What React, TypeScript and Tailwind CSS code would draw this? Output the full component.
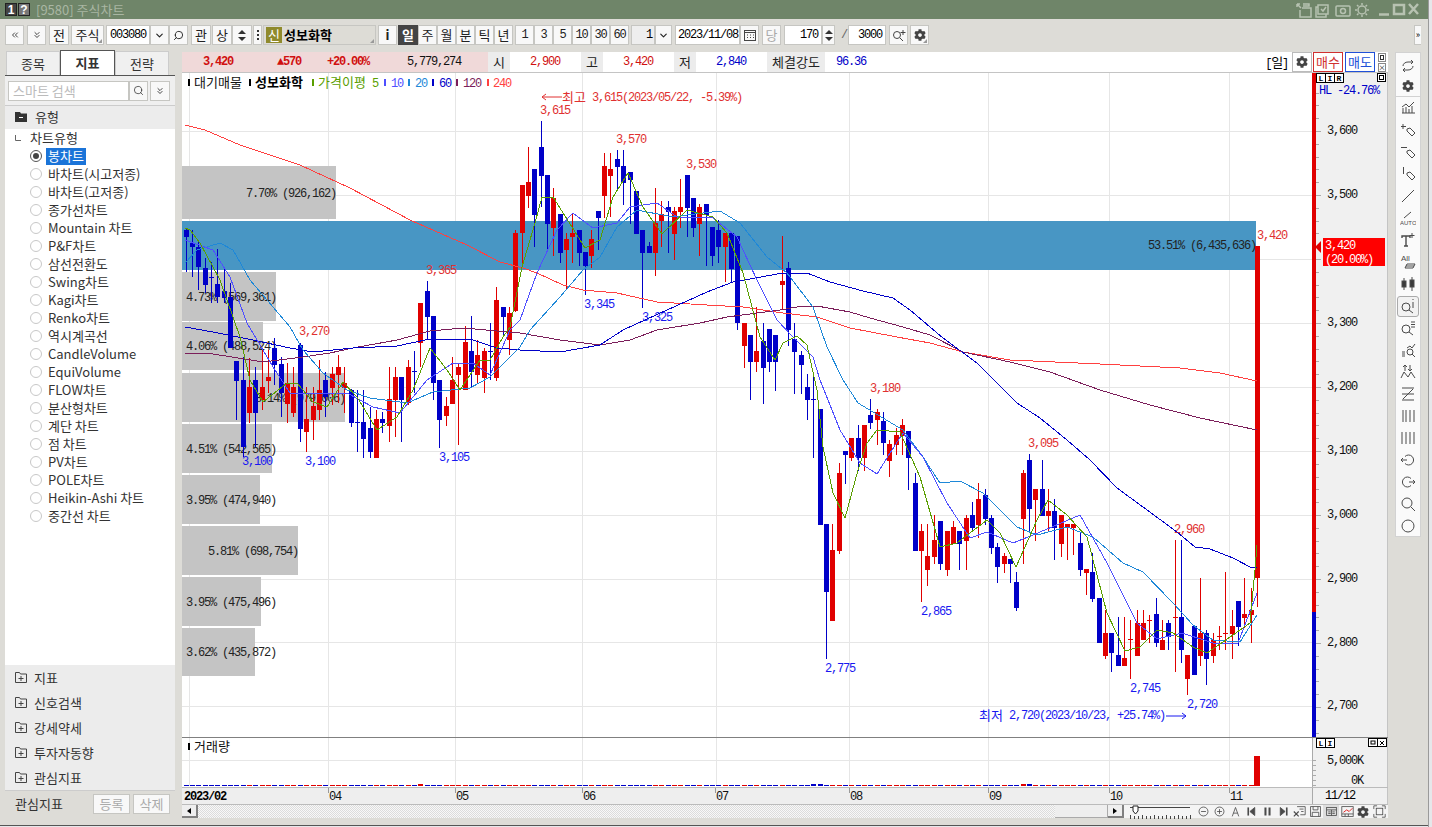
import { ChevronDown, ChevronsDown, ChevronsLeft, Search } from "lucide-react";
import { FaCog } from "react-icons/fa";
import type { ReactNode } from "react";

const mono = "font-['Liberation_Mono','Noto_Sans_CJK_KR',monospace] tracking-[-1.2px] text-xs";
const kr = "font-['Noto_Sans_CJK_KR','Liberation_Sans',sans-serif] text-[13px]";

type Row = [string, number, number, number, number];

// candle rows are read from 3x crops: [colour, body top, body bottom, wick top, wick bottom]
const seg = (oy: number, rows: Row[]) =>
  rows.map(([c, t, b, wt, wb]) => ({
    c,
    t: Math.round(oy + t / 3),
    b: Math.round(oy + b / 3),
    wt: Math.round(oy + wt / 3),
    wb: Math.round(oy + wb / 3),
  }));

const candles = [
  ...seg(220, [
    ["b", 30, 50, 25, 155], ["b", 70, 80, 30, 170], ["b", 80, 140, 60, 210], ["b", 145, 195, 115, 220],
    ["b", 170, 173, 125, 250], ["b", 192, 232, 88, 250], ["b", 212, 235, 145, 250], ["b", 232, 385, 190, 385],
    ["b", 423, 483, 423, 600], ["b", 480, 680, 410, 710], ["r", 500, 578, 415, 608], ["b", 480, 578, 440, 680],
    ["r", 500, 540, 390, 570], ["r", 470, 483, 390, 520], ["b", 385, 435, 355, 495], ["b", 432, 520, 410, 590],
    ["r", 490, 552, 430, 608], ["r", 500, 578, 440, 590], ["b", 375, 627, 370, 665], ["r", 597, 635, 500, 695],
    ["r", 558, 600, 500, 660], ["r", 510, 570, 420, 600], ["b", 480, 530, 455, 590], ["r", 462, 504, 440, 555],
    ["r", 440, 465, 405, 550], ["r", 488, 505, 440, 578], ["b", 510, 608, 508, 620], ["b", 606, 609, 510, 695],
    ["b", 606, 656, 510, 715], ["b", 624, 696, 560, 715], ["r", 597, 714, 570, 714], ["b", 597, 608, 575, 640],
    ["r", 537, 618, 440, 665], ["r", 470, 540, 440, 650], ["b", 470, 540, 470, 665], ["r", 440, 550, 420, 555],
    ["b", 453, 456, 392, 520], ["r", 249, 370, 249, 440], ["b", 212, 290, 183, 360], ["b", 288, 490, 288, 540],
    ["b", 480, 600, 480, 683], ["r", 558, 588, 530, 617], ["r", 480, 552, 410, 552], ["r", 440, 465, 430, 675],
    ["r", 365, 510, 318, 510], ["b", 393, 455, 288, 505], ["r", 405, 465, 360, 490], ["r", 393, 473, 383, 520],
    ["b", 393, 396, 308, 480], ["r", 240, 473, 200, 483], ["b", 261, 290, 261, 350], ["r", 278, 360, 260, 405],
    ["r", 40, 272, 30, 275],
  ]),
  ...seg(110, [
    ["r", 225, 370, 225, 470], ["r", 216, 258, 110, 295], ["b", 177, 315, 177, 410], ["b", 111, 197, 33, 290],
    ["b", 195, 342, 195, 420], ["r", 264, 353, 235, 438], ["b", 312, 428, 312, 460], ["r", 387, 420, 370, 540],
    ["r", 370, 381, 312, 458], ["b", 360, 428, 360, 468], ["b", 426, 468, 426, 555], ["r", 387, 437, 360, 475],
    ["b", 303, 323, 303, 420], ["r", 168, 258, 129, 325], ["r", 177, 197, 129, 322], ["b", 147, 171, 120, 237],
    ["b", 168, 219, 120, 285], ["b", 187, 210, 187, 342], ["b", 243, 372, 243, 372], ["b", 360, 428, 360, 595],
    ["b", 408, 428, 395, 428], ["r", 339, 428, 235, 497], ["r", 312, 333, 273, 410], ["b", 291, 306, 273, 428],
    ["r", 303, 372, 292, 450], ["r", 291, 306, 207, 353], ["b", 195, 295, 195, 381], ["b", 264, 353, 264, 381],
    ["r", 291, 342, 283, 438], ["b", 282, 315, 282, 467], ["b", 351, 437, 351, 467], ["b", 360, 410, 330, 460],
    ["r", 369, 410, 369, 515], ["b", 369, 477, 369, 520], ["b", 378, 640, 378, 660],
  ]),
  ...seg(230, [
    ["r", 279, 348, 279, 413], ["b", 315, 395, 315, 510], ["r", 363, 395, 232, 426], ["b", 333, 414, 279, 522],
    ["b", 297, 396, 297, 426], ["b", 315, 396, 315, 483], ["r", 153, 165, 18, 240], ["b", 114, 300, 96, 348],
    ["b", 327, 366, 279, 492], ["b", 375, 405, 363, 492], ["b", 471, 510, 432, 570], ["b", 507, 510, 441, 684],
  ]),
  ...seg(380, [
    ["b", 87, 435, 87, 435], ["b", 432, 636, 432, 836], ["r", 510, 722, 432, 722], ["r", 279, 513, 250, 522],
    ["b", 213, 225, 213, 312], ["r", 174, 234, 174, 243], ["b", 174, 234, 135, 273], ["r", 135, 234, 135, 273],
    ["b", 105, 129, 57, 147], ["r", 96, 120, 87, 195], ["b", 124, 189, 96, 225], ["r", 192, 243, 180, 291],
    ["r", 165, 195, 144, 225], ["r", 135, 168, 117, 225], ["b", 153, 234, 153, 330], ["b", 309, 513, 279, 513],
    ["r", 453, 513, 432, 666], ["r", 528, 570, 432, 618], ["r", 480, 531, 405, 552], ["b", 423, 552, 423, 570],
    ["r", 453, 570, 453, 588], ["r", 441, 492, 423, 492], ["b", 453, 492, 453, 570], ["r", 414, 483, 405, 570],
    ["b", 405, 444, 366, 456], ["r", 357, 435, 309, 474], ["b", 345, 417, 327, 435], ["b", 414, 504, 405, 522],
    ["b", 501, 561, 489, 609], ["r", 528, 552, 519, 579], ["b", 537, 552, 537, 609], ["b", 606, 684, 576, 693],
    ["r", 279, 417, 270, 552], ["b", 240, 387, 222, 456], ["r", 327, 360, 327, 483],
  ]),
  ...seg(440, [
    ["b", 147, 228, 60, 228], ["r", 213, 228, 147, 276], ["b", 213, 264, 177, 360], ["r", 225, 312, 225, 350],
    ["r", 252, 264, 252, 360], ["r", 252, 264, 252, 345], ["b", 309, 390, 276, 408], ["r", 387, 399, 387, 465],
    ["b", 396, 477, 340, 486], ["b", 474, 609, 474, 609], ["r", 579, 648, 510, 657], ["b", 579, 639, 579, 696],
    ["b", 645, 678, 531, 678], ["r", 654, 678, 531, 678], ["r", 597, 600, 540, 717], ["r", 549, 648, 510, 648],
    ["r", 549, 600, 510, 600], ["r", 539, 542, 525, 609], ["b", 522, 609, 474, 622], ["r", 600, 630, 540, 630],
    ["b", 549, 591, 540, 630], ["r", 531, 534, 300, 696], ["b", 531, 630, 300, 669], ["r", 645, 717, 645, 765],
    ["b", 558, 705, 558, 705], ["r", 579, 648, 414, 678], ["b", 579, 657, 570, 735], ["r", 600, 648, 579, 669],
    ["r", 588, 591, 558, 630], ["r", 578, 581, 396, 630], ["r", 558, 582, 510, 657], ["b", 483, 561, 483, 618],
    ["r", 522, 534, 414, 564], ["r", 510, 525, 444, 609], ["r", -582, 415, -582, 500],
  ]),
];

const cx = (i: number) => Math.round(185.7 + i * 6.34);
const RED = "#e00000";
const BLUE = "#0000c8";

const ma240 = "185,125 205,130 240,145 300,165 350,188 410,220 467,245 500,262 523,268 537,273 563,285 583,290 617,293 657,302 707,305 743,307 783,313 817,317 850,328 897,337 930,343 963,352 1010,360 1100,364 1180,368 1220,373 1257,381";
const ma120 = "185,353 213,354 263,362 303,357 330,353 353,348 397,340 430,331 463,328 520,333 560,340 600,345 630,340 657,330 700,323 727,317 780,310 797,307 817,306 850,312 870,318 903,327 930,335 963,352 1010,362 1050,372 1100,390 1150,405 1200,418 1257,430";
const ma60 = "185,327 213,332 253,340 290,348 313,352 353,348 397,346 430,339 470,339 497,348 520,350 560,352 600,345 623,330 667,310 707,292 733,282 783,273 807,273 830,282 863,291 893,298 910,310 943,338 977,363 1017,403 1040,418 1067,440 1090,460 1117,488 1143,507 1177,532 1195,547 1210,549 1233,558 1252,568 1257,567";
const ma20 = "185,263 197,250 220,243 233,250 250,280 273,307 290,327 303,350 323,373 347,390 370,398 407,403 433,392 470,388 490,377 520,347 530,330 560,297 583,270 600,257 617,227 637,210 673,217 687,215 720,211 740,223 767,257 787,273 813,307 827,347 843,380 858,403 903,430 923,457 940,483 960,481 983,493 1017,527 1037,535 1067,527 1093,537 1123,563 1143,572 1173,603 1193,625 1213,640 1240,642 1257,615";
const ma10 = "185,240 213,250 230,277 247,323 273,367 290,393 320,393 347,393 373,407 400,413 427,380 453,363 473,363 490,375 510,330 520,320 537,273 557,230 573,213 593,228 617,223 630,207 657,203 677,217 713,218 737,237 757,280 777,320 793,337 813,357 820,380 840,430 860,463 877,474 890,453 903,433 923,457 947,503 970,538 987,532 1013,543 1033,535 1080,515 1107,563 1137,623 1157,639 1182,633 1213,643 1238,643 1257,593";
const ma5 = "185,228 190,230 200,243 220,280 240,337 250,380 263,402 287,383 297,383 313,402 327,407 343,382 357,397 377,430 397,417 413,390 430,348 447,370 460,390 480,360 490,360 503,337 510,327 522,267 535,223 542,197 553,197 572,227 585,248 600,240 613,197 628,173 643,207 662,234 687,210 713,217 727,233 743,273 760,337 775,360 783,343 797,336 807,345 817,390 823,447 833,493 845,518 858,470 867,443 877,430 900,432 920,477 940,547 957,543 987,520 1000,533 1016,567 1037,520 1048,500 1067,515 1087,537 1107,613 1125,651 1140,647 1157,630 1173,633 1193,647 1207,653 1223,642 1250,623 1255,570 1257,545";

const profile = [
  { y: 166, h: 53, r: 336, x: 246, t: "7.70% (926,162)" },
  { y: 272, h: 49, r: 276, x: 186, t: "4.73% (569,361)" },
  { y: 322, h: 48, r: 263, x: 186, t: "4.06% (488,524)" },
  { y: 373, h: 49, r: 345, x: 255, t: "8.14% (979,006)" },
  { y: 424, h: 49, r: 272, x: 186, t: "4.51% (542,565)" },
  { y: 475, h: 49, r: 260, x: 186, t: "3.95% (474,940)" },
  { y: 526, h: 49, r: 298, x: 208, t: "5.81% (698,754)" },
  { y: 577, h: 49, r: 261, x: 186, t: "3.95% (475,496)" },
  { y: 628, h: 48, r: 255, x: 186, t: "3.62% (435,872)" },
];

const peaks: [number, number, string, string][] = [
  [540, 110, "3,615", "#e03030"], [616, 139, "3,570", "#e03030"], [686, 164, "3,530", "#e03030"],
  [426, 270, "3,365", "#e03030"], [299, 331, "3,270", "#e03030"], [870, 388, "3,180", "#e03030"],
  [1028, 443, "3,095", "#e03030"], [1174, 529, "2,960", "#e03030"], [1257, 235, "3,420", "#e03030"],
  [242, 461, "3,100", "#1818f0"], [305, 461, "3,100", "#1818f0"], [439, 457, "3,105", "#1818f0"],
  [584, 304, "3,345", "#1818f0"], [642, 317, "3,325", "#1818f0"], [921, 611, "2,865", "#1818f0"],
  [825, 668, "2,775", "#1818f0"], [1130, 688, "2,745", "#1818f0"], [1187, 704, "2,720", "#1818f0"],
];

const vGrid = [189, 328, 455, 582, 716, 849, 988, 1109, 1229];
const hGrid = [131, 195, 259, 323, 387, 451, 515, 579, 642, 706];
const months: [number, string][] = [[329, "04"], [456, "05"], [583, "06"], [716, "07"], [850, "08"], [989, "09"], [1110, "10"], [1230, "11"]];

const chartTypes = [
  "봉차트", "바차트(시고저종)", "바차트(고저종)", "종가선차트", "Mountain 차트", "P&F차트", "삼선전환도", "Swing차트",
  "Kagi차트", "Renko차트", "역시계곡선", "CandleVolume", "EquiVolume", "FLOW차트", "분산형차트", "계단 차트", "점 차트",
  "PV차트", "POLE차트", "Heikin-Ashi 차트", "중간선 차트",
];

function Btn({ className = "", children, corner }: { className?: string; children?: ReactNode; corner?: boolean }) {
  return (
    <div className={`relative flex h-5 shrink-0 items-center justify-center border border-[#c6c6c2] bg-[#f8f8f8] text-[#222] ${className}`}>
      {children}
      {corner && <span className="absolute bottom-px right-px h-0 w-0 border-b-[4px] border-l-[4px] border-b-[#999] border-l-transparent" />}
    </div>
  );
}

function Ico({ children, size = 16 }: { children: ReactNode; size?: number }) {
  return (
    <svg width={size} height={size} viewBox="0 0 16 16" fill="none" stroke="#4a4a4a" strokeWidth="1" className="shrink-0">
      {children}
    </svg>
  );
}

const toolIcons: ReactNode[] = [
  <><path d="M2 13h13M3 13V8M6 13V7M9 13V9M12 13V6" /><path d="M2 7l4-3 3 3 5-5" /></>,
  <><path d="M2 2v5M0 4.500h5" transform="translate(1 0)" /><path d="M7 7l3-1 5 5-3 3-5-5z" /></>,
  <><path d="M1 3.500h6" /><path d="M7 7l3-1 5 5-3 3-5-5z" /></>,
  <><path d="M3.500 1v7" /><path d="M7 7l3-1 5 5-3 3-5-5z" /></>,
  <path d="M2 14L14 2" />,
  <><path d="M4 8l7-6" /><text x="0" y="15" fill="#4a4a4a" stroke="none" className="font-['Liberation_Sans',sans-serif] text-[6px]">AUTO</text></>,
  <><path d="M2 6V4h8v2M6 4v10M4 14h4" strokeWidth="1.400" /><path d="M12 1v5M9.500 3.500h5" /></>,
  <><text x="1" y="7" fill="#4a4a4a" stroke="none" className="font-['Liberation_Sans',sans-serif] text-[8px]">All</text><path d="M5 14l2-4h8l-2 4z" /><path d="M6 12h8" /></>,
  <><path d="M4 2v12M12 1v14" /><rect x="2" y="5" width="4" height="6" fill="#3a3a3a" /><rect x="10" y="4" width="4" height="7" fill="#3a3a3a" /></>,
  <><circle cx="6" cy="9" r="4" /><path d="M9 12l4 3" /><path d="M13 1v1M13 4v6" /></>,
  <><circle cx="6" cy="9" r="4" /><path d="M9 12l4 3M11 2h4M11 4.500h4M11 7h4" /></>,
  <><path d="M7 6l3-2 2 2 3-4M2 10h3M2 12h3M2 14h3" /><circle cx="10" cy="10" r="3" /><path d="M12 12l3 3" /></>,
  <><path d="M5 1v6M3 3l2-2 2 2M10 7V1M8 5l2 2 2-2" /><path d="M1 14l3-6 4 5 3-5 4 6" /></>,
  <path d="M2 2h12M2 8h12M2 14h12M13 3L3 13" />,
  <path d="M3 2v12M6 2v12M10 2v12M14 2v12" />,
  <path d="M2 2v12M6 2v12M10 2v12M14 2v12" />,
  <><path d="M5 4.500a5 5 0 1 1 0 7" /><path d="M1 8h6M3 6L1 8l2 2" /></>,
  <><path d="M11 4.500a5 5 0 1 0 0 7" /><path d="M9 8h6M13 6l2 2-2 2" /></>,
  <><circle cx="7" cy="7" r="5" /><path d="M11 11l4 4" /></>,
  <circle cx="8" cy="8" r="6" />,
];

const bottomIcons: ReactNode[] = [
  <><circle cx="8" cy="8" r="5.500" /><path d="M5 8h6" /></>,
  <><circle cx="8" cy="8" r="5.500" /><path d="M5 8h6M8 5v6" /></>,
  <path d="M4 14L8 3l4 11M5.500 10h5" />,
  <><path d="M4 3v10" strokeWidth="2" /><path d="M12 3v10L6 8z" fill="#4a4a4a" /></>,
  <path d="M5.500 3v10M10.500 3v10" strokeWidth="2.500" />,
  <><path d="M12 3v10" strokeWidth="2" /><path d="M4 3v10l6-5z" fill="#4a4a4a" /></>,
  <><path d="M5 2h10v10H9" /><path d="M1 8l6 6M7 8l-6 6" strokeWidth="1.400" /><path d="M8 5h5M10 8h3" /></>,
  <><rect x="2" y="2" width="12" height="12" /><path d="M5 2v4h6V2M4 14V9h8v5" /></>,
  <><rect x="2" y="3" width="12" height="10" /><path d="M2 6h12M4 8.500h3M9 8.500h3M4 10.500h3M9 10.500h3M8 6v7" /></>,
  <><rect x="1" y="2" width="14" height="12" /><path d="M1 11h14M5 11v3M9 11v3" /><path d="M3 9l4-3 3 2 4-4" stroke="#e00000" /></>,
  null,
  <><rect x="4" y="4" width="8" height="8" /><path d="M1 5V1h4M11 1h4v4M15 11v4h-4M5 15H1v-4" /></>,
];

function Boxed({ x, y, w, c, s = 9 }: { x: number; y: number; w: number; c: string; s?: number }) {
  return (
    <g>
      <rect x={x + 0.5} y={y + 0.5} width={w} height={s} fill="#fff" stroke="#000" />
      <text x={x + w / 2 + 0.5} y={y + 8} textAnchor="middle" fill="#000" fontWeight="bold" className="font-['Liberation_Mono',monospace] text-[8px]">{c}</text>
    </g>
  );
}

function PriceChart() {
  return (
    <svg width={1130} height={664} viewBox="182 73 1130 664" className="block shrink-0 bg-white">
      {vGrid.map((x) => <rect key={x} x={x} y={73} width={1} height={664} fill="#e6e6e6" />)}
      {hGrid.map((y) => <rect key={y} x={182} y={y} width={1130} height={1} fill="#e6e6e6" />)}

      {profile.map((p) => <rect key={p.y} x={182} y={p.y} width={p.r - 182} height={p.h} fill="#c4c4c4" />)}
      <rect x={182} y={221} width={1074} height={49} fill="#4896c4" />
      {profile.map((p) => <text key={p.t} x={p.x} y={p.y + p.h / 2 + 4} fill="#222" className={mono}>{p.t}</text>)}
      <text x={1148} y={249} fill="#222" className={mono}>53.51% (6,435,636)</text>

      {peaks.map(([x, y, t, c]) => <text key={`${t}${x}`} x={x} y={y + 4} fill={c} className={mono}>{t}</text>)}

      <g shapeRendering="crispEdges">
        {candles.map((k, i) => {
          const fill = k.c === "r" ? RED : BLUE;
          return (
            <g key={i} fill={fill}>
              <rect x={cx(i)} y={k.wt} width={1} height={Math.max(k.wb - k.wt, 1)} />
              <rect x={cx(i) - 2} y={k.t} width={5} height={Math.max(k.b - k.t, 1)} />
            </g>
          );
        })}
      </g>

      <g fill="none" strokeWidth="1" shapeRendering="crispEdges">
        <polyline points={ma240} stroke="#ff4040" />
        <polyline points={ma120} stroke="#7b1e5a" />
        <polyline points={ma60} stroke="#0000c8" />
        <polyline points={ma20} stroke="#1e88d8" />
        <polyline points={ma10} stroke="#4f4fff" />
        <polyline points={ma5} stroke="#5a9e00" />
      </g>

      <rect x={188} y={79} width={2} height={7} fill="#000" />
      <text x={194} y={87} fill="#111" className={kr}>대기매물</text>
      <rect x={249} y={79} width={2} height={7} fill="#000" />
      <text x={255} y={87} fill="#000" fontWeight="bold" className={kr}>성보화학</text>
      <rect x={312} y={79} width={2} height={7} fill="#5a9e00" />
      <text x={318} y={87} fill="#5a9e00" className={kr}>가격이평</text>
      <text x={372} y={87} fill="#5a9e00" className={mono}>5</text>
      <rect x={384} y={79} width={2} height={7} fill="#4f4fff" />
      <text x={391} y={87} fill="#4f4fff" className={mono}>10</text>
      <rect x={408} y={79} width={2} height={7} fill="#1e88d8" />
      <text x={415} y={87} fill="#1e88d8" className={mono}>20</text>
      <rect x={432} y={79} width={2} height={7} fill="#0000c8" />
      <text x={439} y={87} fill="#0000c8" className={mono}>60</text>
      <rect x={456} y={79} width={2} height={7} fill="#7b1e5a" />
      <text x={463} y={87} fill="#7b1e5a" className={mono}>120</text>
      <rect x={487} y={79} width={2} height={7} fill="#ff4040" />
      <text x={493} y={87} fill="#ff4040" className={mono}>240</text>

      <path d="M542 97h20M546 94l-4 3 4 3" stroke="#e03030" fill="none" />
      <text x={562} y={102} fill="#e03030" className={kr}>최고</text>
      <text x={592} y={101} fill="#e03030" className={mono}>3,615(2023/05/22, -5.39%)</text>
      <text x={979} y={720} fill="#1818f0" className={kr}>최저</text>
      <text x={1009} y={719} fill="#1818f0" className={mono}>2,720(2023/10/23, +25.74%)</text>
      <path d="M1166 716h20M1182 713l4 3-4 3" stroke="#1818f0" fill="none" />
    </svg>
  );
}

function PriceAxis() {
  const ticks = Array.from({ length: 52 }, (_, i) => 131 - 12.8 * 4 + i * 12.8);
  const labels: [number, string][] = [[130, "3,600"], [194, "3,500"], [322, "3,300"], [386, "3,200"], [450, "3,100"], [514, "3,000"], [578, "2,900"], [642, "2,800"], [705, "2,700"]];
  return (
    <svg width={71} height={664} viewBox="1316 73 71 664" className="block shrink-0 bg-[#f0f0f0]">
      {ticks.map((y, i) => (
        <rect key={y} x={1316} y={Math.round(y)} width={(i - 4) % 5 === 0 ? 5 : 3} height={1} fill="#aaa" />
      ))}
      <Boxed x={1316} y={73} w={9} c="L" />
      <Boxed x={1325} y={73} w={9} c="I" />
      <Boxed x={1334} y={73} w={9} c="R" />
      <rect x={1377.5} y={73.5} width={8} height={8} fill="#fff" stroke="#000" />
      <rect x={1379.5} y={75.5} width={4} height={4} fill="none" stroke="#000" />
      <text x={1319} y={94} fill="#0000c8" className={mono}>HL -24.76%</text>
      {labels.map(([y, t]) => <text key={t} x={1327} y={y + 4} fill="#111" className={mono}>{t}</text>)}
      <path d="M1321 241v12l-6-6z" fill="#e00000" />
      <rect x={1323} y={238} width={62} height={28} fill="#ff0000" />
      <text x={1325} y={249} fill="#fff" className={mono}>3,420</text>
      <text x={1325} y={263} fill="#fff" className={mono}>(20.00%)</text>
    </svg>
  );
}

function VolumeChart() {
  return (
    <svg width={1130} height={49} viewBox="182 738 1130 49" className="block shrink-0 bg-white">
      {vGrid.map((x) => <rect key={x} x={x} y={738} width={1} height={48} fill="#e6e6e6" />)}
      <rect x={182} y={760} width={1130} height={1} fill="#e6e6e6" />
      <rect x={188} y={743} width={2} height={7} fill="#000" />
      <text x={194} y={751} fill="#111" className={kr}>거래량</text>
      {candles.slice(0, 169).map((k, i) => {
        const big = [37, 99, 133, 132, 37].includes(i) || i === 100;
        return <rect key={i} x={cx(i) - 2} y={big ? 784 : 785} width={5} height={big ? 2 : 1} fill={k.c === "r" ? RED : BLUE} />;
      })}
      <rect x={1254} y={756} width={6} height={30} fill={RED} />
    </svg>
  );
}

function SliderBar() {
  return (
    <svg width={70} height={14} viewBox="0 0 70 14" className="shrink-0" fill="none" stroke="#444">
      <path d="M6 2.500h60" />
      <path d="M9 1h5v5l-2.500 3L9 6z" fill="#fff" stroke="#222" />
      {Array.from({ length: 16 }, (_, i) => <path key={i} d={`M${6.5 + i * 4} ${i % 3 === 0 ? 10 : 11}V14`} />)}
    </svg>
  );
}

function TitleBar() {
  return (
    <div className="flex h-[19px] shrink-0 items-center bg-[#6f8569] pl-[2px] pr-2">
      <div className="ml-[3px] flex h-[13px] w-[12px] items-center justify-center border border-[#222] bg-[#444] text-[12px] font-bold text-white font-['Liberation_Sans',sans-serif]">1</div>
      <div className="ml-px flex h-[13px] w-[12px] items-center justify-center border border-[#222] bg-[#777] text-[12px] font-bold text-white font-['Liberation_Sans',sans-serif]">?</div>
      <span className="ml-[6px] text-[13px] text-[#a9b6a3] font-['Noto_Sans_CJK_KR',sans-serif]">[9580] 주식차트</span>
      <div className="ml-auto flex items-center">
        <svg width={126} height={16} viewBox="0 0 126 16" fill="none" stroke="#b7c2b1" strokeWidth="1.500">
          <path d="M3 2h3M3 2v3M3 2l4 4M9 2h6v2h-6M8 6h9v9H6V8" />
          <path d="M24 5h-2v10h10v-3M24 3h10v9H24zM27 7l2 2 3-4" />
          <rect x="42" y="4" width="14" height="10" rx="1" /><circle cx="49" cy="9" r="2.500" />
          <circle cx="68" cy="8" r="4" /><path d="M68 1v2M68 13v2M61 8h2M73 8h2M63 3l1.500 1.500M73 3l-1.500 1.500M63 13l1.500-1.500M73 13l-1.500-1.500" />
          <path d="M85 12.500h10" strokeWidth="2.500" />
          <rect x="100" y="3" width="10" height="9" strokeWidth="2.500" />
          <path d="M115 2l9 10M124 2l-9 10" strokeWidth="2.500" />
        </svg>
      </div>
    </div>
  );
}

function Toolbar() {
  const periods = ["주", "월", "분", "틱", "년"];
  const mins = ["1", "3", "5", "10", "30", "60"];
  return (
    <div className={`mt-[6px] flex h-5 shrink-0 items-center pl-[5px] ${kr}`}>
      <Btn className="w-[19px]"><ChevronsLeft size={10} /></Btn>
      <Btn className="ml-[3px] w-[19px]"><ChevronsDown size={10} /></Btn>
      <Btn className="ml-[3px] w-[20px]">전</Btn>
      <Btn className="ml-[2px] w-[33px]" corner>주식</Btn>
      <div className="ml-[2px] flex h-5 w-[44px] shrink-0 items-center border border-[#c6c6c2] bg-white pl-[3px]"><span className={mono}>003080</span></div>
      <Btn className="w-[19px]"><ChevronDown size={11} strokeWidth={2.500} /></Btn>
      <Btn className="w-[19px]"><Search size={11} className="-scale-x-100" /></Btn>
      <Btn className="ml-[3px] w-[20px]">관</Btn>
      <Btn className="ml-[1px] w-[20px]">상</Btn>
      <Btn className="w-[20px] flex-col gap-[3px]">
        <span className="h-0 w-0 border-x-[4px] border-b-[4px] border-x-transparent border-b-[#333]" />
        <span className="h-0 w-0 border-x-[4px] border-t-[4px] border-x-transparent border-t-[#333]" />
      </Btn>
      <Btn className="ml-px w-[9px] flex-col gap-[2px] px-0">
        <span className="h-[2px] w-[2px] bg-[#333]" /><span className="h-[2px] w-[2px] bg-[#333]" /><span className="h-[2px] w-[2px] bg-[#333]" />
      </Btn>
      <div className="relative ml-px flex h-5 w-[113px] shrink-0 items-center border border-[#c6c6c2] bg-[#dddcd6] pl-[2px]">
        <span className="flex h-4 w-4 items-center justify-center bg-[#8f8a2c] text-white">신</span>
        <span className="ml-[2px] font-bold text-black">성보화학</span>
        <span className="absolute bottom-px right-px h-0 w-0 border-b-[4px] border-l-[4px] border-b-[#999] border-l-transparent" />
      </div>
      <Btn className="ml-[2px] w-[19px] font-bold">i</Btn>
      <div className="ml-px flex h-5 w-[20px] shrink-0 items-center justify-center bg-[#444] font-bold text-white">일</div>
      {periods.map((p) => <Btn key={p} className="w-[19px]">{p}</Btn>)}
      <div className="ml-[2px] flex">
        {mins.map((m) => <Btn key={m} className="w-[19px]"><span className={mono}>{m}</span></Btn>)}
      </div>
      <div className="ml-[2px] flex h-5 w-[24px] shrink-0 items-center justify-end border border-[#c6c6c2] bg-[#eee] pr-[2px]"><span className={mono}>1</span></div>
      <Btn className="w-[17px]"><ChevronDown size={11} strokeWidth={2.500} /></Btn>
      <div className="ml-[3px] flex h-5 w-[65px] shrink-0 items-center border border-[#c6c6c2] bg-white pl-[2px]"><span className={mono}>2023/11/08</span></div>
      <Btn className="w-[19px]">
        <svg width="12" height="12" viewBox="0 0 12 12" fill="none" stroke="#444"><rect x="0.500" y="1.500" width="11" height="10" /><path d="M0 3.500h12M3 6h1M6 6h1M9 6h1M3 8.500h1M6 8.500h1M9 8.500h1" /></svg>
      </Btn>
      <Btn className="ml-[3px] w-[19px] text-[#aaa]">당</Btn>
      <div className="ml-[3px] flex h-5 w-[38px] shrink-0 items-center justify-end border border-[#c6c6c2] bg-white pr-[3px]"><span className={mono}>170</span></div>
      <Btn className="w-[13px] flex-col gap-[3px]">
        <span className="h-0 w-0 border-x-[4px] border-b-[4px] border-x-transparent border-b-[#333]" />
        <span className="h-0 w-0 border-x-[4px] border-t-[4px] border-x-transparent border-t-[#333]" />
      </Btn>
      <span className={`ml-[6px] w-[7px] text-[#666] ${mono}`}>/</span>
      <div className="flex h-5 w-[38px] shrink-0 items-center justify-end border border-[#c6c6c2] bg-white pr-[3px]"><span className={mono}>3000</span></div>
      <Btn className="ml-[3px] w-[19px]">
        <svg width="14" height="12" viewBox="0 0 14 12" fill="none" stroke="#444"><circle cx="5" cy="6" r="3.500" /><path d="M8 9l3 3M11 1v5M8.500 3.500h5" /></svg>
      </Btn>
      <Btn className="ml-[2px] w-[19px]" corner><FaCog size={12} color="#444" /></Btn>
      <div className="ml-auto mr-[7px] flex h-5 w-[7px] items-center justify-center border border-[#c6c6c2] border-r-0 bg-[#f8f8f8] text-[9px]">»</div>
    </div>
  );
}

function SidePanel() {
  const folders = ["지표", "신호검색", "강세약세", "투자자동향", "관심지표"];
  return (
    <div className={`flex h-[767px] w-[170px] shrink-0 flex-col text-[#333] ${kr}`}>
      <div className="flex h-[25px] shrink-0 items-end border-b border-[#555]">
        <div className="ml-px flex h-6 w-[54px] items-center justify-center border border-b-0 border-[#ccc] bg-[#f0f0f0]">종목</div>
        <div className="flex h-[25px] w-[55px] items-center justify-center border border-b-0 border-[#555] bg-white font-bold">지표</div>
        <div className="flex h-6 w-[54px] items-center justify-center border border-b-0 border-[#ccc] bg-[#f0f0f0]">전략</div>
      </div>
      <div className="flex h-[29px] shrink-0 items-center bg-[#efefef] pl-[3px]">
        <div className="flex h-5 w-[121px] items-center border border-[#c6c6c2] bg-white pl-[4px] text-[#bbb]">스마트 검색</div>
        <Btn className="w-[19px]"><Search size={11} strokeWidth={1.500} /></Btn>
        <Btn className="ml-[2px] w-[20px]"><ChevronsDown size={10} /></Btn>
      </div>
      <div className="flex h-[24px] shrink-0 items-center border-t border-[#ccc] bg-[#ececec] pb-[2px] pl-[10px]">
        <svg width="12" height="10" viewBox="0 0 12 10"><path d="M0 0h5l1 1.500h6V10H0z" fill="#333" /><path d="M4 5.500h4" stroke="#fff" /></svg>
        <span className="ml-[8px]">유형</span>
      </div>
      <div className="flex flex-1 flex-col bg-white pl-[10px]">
        <div className="flex h-[18px] items-center">
          <svg width="6" height="6" viewBox="0 0 6 6" fill="none" stroke="#666"><path d="M.5 0v5.500H6" /></svg>
          <span className="ml-[9px]">차트유형</span>
        </div>
        {chartTypes.map((t, i) => (
          <div key={t} className="flex h-[18px] items-center pl-[15px]">
            <span className={`flex h-[12px] w-[12px] shrink-0 items-center justify-center rounded-full border ${i === 0 ? "border-[#555]" : "border-[#c8c8c8]"}`}>
              {i === 0 && <span className="h-[6px] w-[6px] rounded-full bg-[#444]" />}
            </span>
            <span className={`ml-[4px] flex h-[17px] items-center pl-[2px] pr-[2px] ${i === 0 ? "bg-[#1b74d8] text-white" : ""}`}>{t}</span>
          </div>
        ))}
      </div>
      <div className="flex h-[125px] shrink-0 flex-col bg-[#ececec] pl-[10px]">
        {folders.map((f) => (
          <div key={f} className="flex h-[25px] items-center">
            <svg width="12" height="11" viewBox="0 0 12 11" fill="none" stroke="#444"><path d="M.5 10.500V.5h4l1 1.500h6v8.500zM3.500 6.500h5M6 4v5" /></svg>
            <span className="ml-[7px]">{f}</span>
          </div>
        ))}
      </div>
      <div className="flex h-[28px] shrink-0 items-center border-t border-[#ccc] bg-[#dddcd7] pb-[1px] pl-[10px] pr-[5px]">
        <span>관심지표</span>
        <Btn className="ml-auto w-[37px] border-[#bbb] bg-[#eee] text-[#aaa]">등록</Btn>
        <Btn className="ml-[3px] w-[37px] border-[#bbb] bg-[#eee] text-[#aaa]">삭제</Btn>
      </div>
    </div>
  );
}

function InfoBar() {
  const cell = "flex h-full items-center justify-center bg-[#ececec] text-[#222]";
  return (
    <div className={`flex h-[21px] shrink-0 items-center border-b border-[#c4c4c4] bg-white ${kr}`}>
      <div className="flex h-full w-[306px] items-center bg-[#f0d9d9]">
        <span className={`ml-[21px] w-[74px] font-bold text-[#d01010] ${mono}`}>3,420</span>
        <span className={`w-[50px] font-bold text-[#d01010] ${mono}`}>▲570</span>
        <span className={`w-[80px] font-bold text-[#d01010] ${mono}`}>+20.00%</span>
        <span className={`text-[#111] ${mono}`}>5,779,274</span>
      </div>
      <div className={`${cell} w-[22px]`}>시</div>
      <div className={`w-[71px] pl-[20px] text-[#d01010] ${mono}`}>2,900</div>
      <div className={`${cell} w-[22px]`}>고</div>
      <div className={`w-[71px] pl-[20px] text-[#d01010] ${mono}`}>3,420</div>
      <div className={`${cell} w-[22px]`}>저</div>
      <div className={`w-[71px] pl-[20px] text-[#0000c8] ${mono}`}>2,840</div>
      <div className={`${cell} w-[58px]`}>체결강도</div>
      <div className={`ml-[11px] text-[#0000c8] ${mono}`}>96.36</div>
      <span className={`ml-auto mr-[4px] ${mono}`}>[<span className={kr}>일</span>]</span>
      <div className="flex h-[20px] w-[20px] items-center justify-center border border-[#bbb]"><FaCog size={12} color="#444" /></div>
      <div className="ml-px flex h-[20px] w-[30px] items-center justify-center border border-[#d03030] text-[#d03030]">매수</div>
      <div className="ml-[2px] flex h-[20px] w-[30px] items-center justify-center border border-[#2050d8] text-[#2050d8]">매도</div>
      <div className="ml-[3px] mr-[2px] flex flex-col gap-px">
        <div className="flex h-[9px] w-[8px] items-center justify-center border border-[#888]"><span className="h-[5px] w-[4px] border border-[#333]" /></div>
        <div className="flex h-[9px] w-[8px] items-center justify-center border border-[#888] text-[7px] leading-none">×</div>
      </div>
    </div>
  );
}

function ChartColumn() {
  return (
    <div className="flex h-[766px] w-[1206px] shrink-0 flex-col">
      <InfoBar />
      <div className="flex h-[664px] shrink-0">
        <PriceChart />
        <div className="flex w-[4px] shrink-0 flex-col">
          <div className="h-[539px] bg-[#e00000]" />
          <div className="flex-1 bg-[#0000c8]" />
        </div>
        <PriceAxis />
        <div className="w-px bg-[#c4c4c4]" />
      </div>
      <div className="h-px shrink-0 bg-[#808080]" />
      <div className="flex h-[49px] shrink-0">
        <VolumeChart />
        <div className="h-[49px] w-px shrink-0 bg-[#aaa]" />
        <svg width={74} height={49} viewBox="1313 738 74 49" className="block shrink-0 bg-[#f0f0f0]">
          <Boxed x={1316} y={738} w={9} c="L" />
          <Boxed x={1325} y={738} w={9} c="I" />
          <rect x={1368.500} y={738.500} width={9} height={8} fill="#fff" stroke="#000" />
          <rect x={1377.500} y={738.500} width={9} height={8} fill="#fff" stroke="#000" />
          <path d="M1380 741l4 4M1384 741l-4 4" stroke="#000" />
          <rect x={1371} y={741} width={4} height={3} fill="none" stroke="#000" />
          <text x={1327} y={764} fill="#111" className={mono}>5,000K</text>
          <text x={1351} y={784} fill="#111" className={mono}>0K</text>
          {[760, 765, 770, 775, 780, 785].map((y) => <rect key={y} x={1313} y={y} width={3} height={1} fill="#aaa" />)}
        </svg>
        <div className="w-px bg-[#c4c4c4]" />
      </div>
      <div className="flex h-[17px] shrink-0 border-t border-[#bbb]">
        <svg width={1130} height={16} viewBox="182 788 1130 16" className="block shrink-0 bg-[#eeeeee]">
          <text x={184} y={800} fill="#000" fontWeight="bold" className={mono}>2023/02</text>
          {months.map(([x, t]) => (
            <g key={t}>
              <rect x={x - 1} y={788} width={1} height={5} fill="#999" />
              <text x={x} y={800} fill="#111" className={mono}>{t}</text>
            </g>
          ))}
        </svg>
        <div className={`flex w-[75px] items-center border-l border-[#aaa] bg-[#f0f0f0] pl-[12px] ${mono}`}>11/12</div>
        <div className="w-px bg-[#c4c4c4]" />
      </div>
      <div className="flex h-[14px] shrink-0 items-center border-t border-[#bbb] bg-[#f4f4f4]">
        <div className="flex h-full w-[16px] items-center justify-center border-b-2 border-r-2 border-[#808080] bg-[#eee]">
          <span className="h-0 w-0 border-y-[3px] border-r-[4px] border-y-transparent border-r-black" />
        </div>
        <div className="h-full w-[857px] bg-[repeating-conic-gradient(#dcdcdc_0_25%,#f8f8f8_0_50%)] bg-[length:2px_2px]" />
        <div className="h-full w-[53px] border-b border-r border-[#aaa] bg-[#eeeeee]" />
        <div className="flex h-full w-[16px] items-center justify-center border-b-2 border-r-2 border-[#808080] bg-[#eee]">
          <span className="h-0 w-0 border-y-[3px] border-l-[4px] border-y-transparent border-l-black" />
        </div>
        <SliderBar />
        <div className="ml-[1px] flex">
          {bottomIcons.map((ic, i) => (
            <div key={i} className={`flex h-[14px] w-[16px] items-center justify-center ${i === 8 ? "bg-[#ddd]" : ""}`}>
              {ic ? <Ico size={13}>{ic}</Ico> : <FaCog size={12} color="#444" />}
            </div>
          ))}
        </div>
      </div>
    </div>
  );
}

function RightTools() {
  return (
    <div className="ml-[7px] flex h-[485px] w-[26px] shrink-0 flex-col border border-[#d2d2d2] bg-[#fafafa]">
      <div className="flex h-[44px] shrink-0 flex-col items-center border-b border-[#d2d2d2] pt-[3px]">
        <div className="flex h-[20px] items-center">
          <Ico><path d="M3 8a5 4 0 0 1 5-4h5M11 2l2 2-2 2M13 8a5 4 0 0 1-5 4H3M5 10l-2 2 2 2" /></Ico>
        </div>
        <div className="flex h-[20px] items-center"><FaCog size={12} color="#444" /></div>
      </div>
      {toolIcons.map((ic, i) => (
        <div key={i} className="flex h-[22px] shrink-0 items-center justify-center">
          <div className={`flex h-[21px] w-[22px] items-center justify-center rounded-[3px] ${i === 9 ? "border border-[#aaa] bg-[#f2f2f2]" : ""}`}>
            <Ico>{ic}</Ico>
          </div>
        </div>
      ))}
    </div>
  );
}

export default function App() {
  return (
    <div className="flex h-[827px] w-[1432px] overflow-hidden bg-[#e6e7ea]">
      <div className="flex h-[826px] w-[1428px] shrink-0 flex-col border-b border-[#555] bg-[#dddcd7]">
        <TitleBar />
        <Toolbar />
        <div className="mt-[6px] flex items-start pl-[5px]">
          <SidePanel />
          <div className="ml-[7px] mt-px flex items-start">
            <ChartColumn />
            <RightTools />
          </div>
        </div>
      </div>
      <div className="h-full w-px bg-[#9a9a9a]" />
    </div>
  );
}
